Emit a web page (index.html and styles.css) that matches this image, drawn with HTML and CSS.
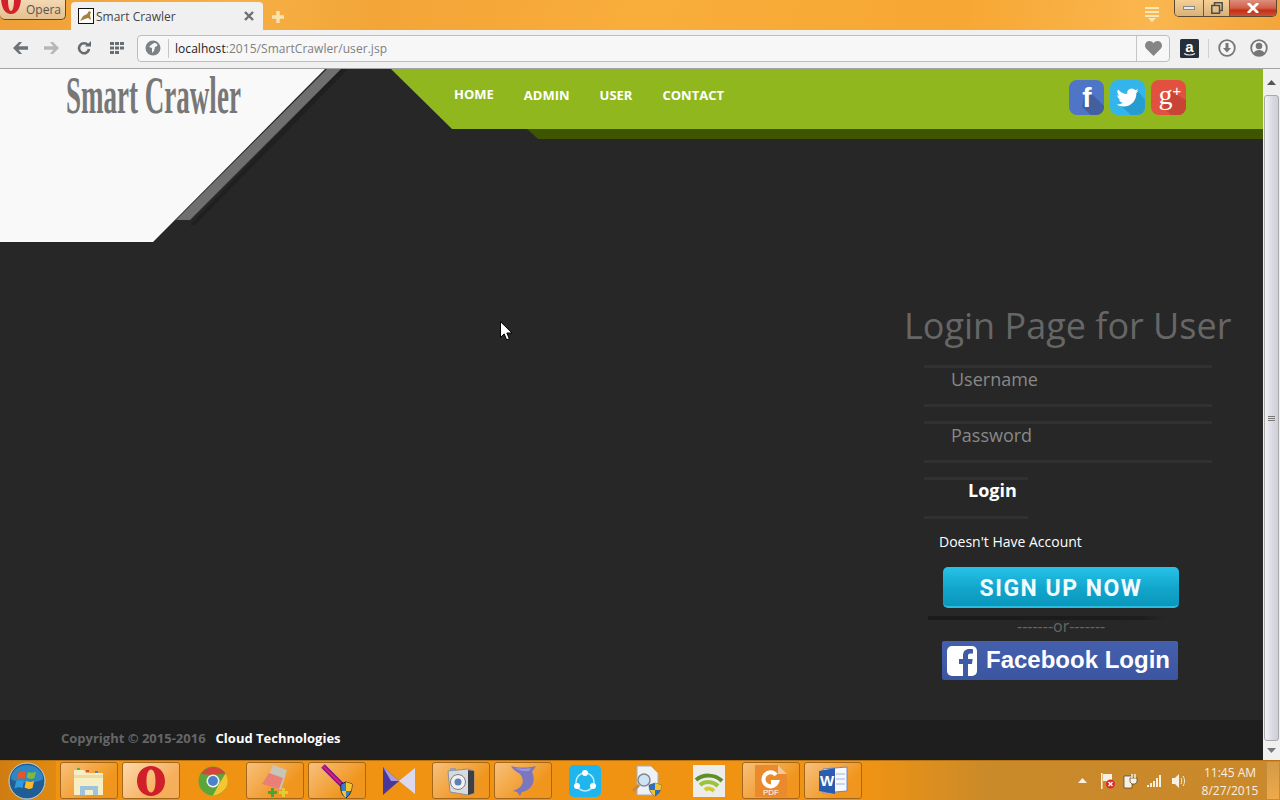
FILE: index.html
```html
<!DOCTYPE html>
<html lang="en">
<head>
    <meta charset="UTF-8">
    <title>Smart Crawler</title>
    <link rel="stylesheet" href="styles.css">
</head>
<body>

<div class="titlebar">
    <div class="opera-btn">
        <svg class="opera-logo" width="22" height="20" viewBox="0 0 22 20"><path fill="#d2202c" fill-rule="evenodd" d="M1 0h20c-.500 9-4 15-10 15S1.500 9 1 0zM8 0c0 8 1.200 12 3 12s3-4 3-12z"/></svg>
        <span>Opera</span>
    </div>
    <div class="tab">
        <svg class="favicon" width="16" height="16" viewBox="0 0 16 16"><rect x=".5" y=".5" width="15" height="15" fill="#fff" stroke="#111"/><path fill="#a8813c" d="M2 13l3-5 4-2 2-3 2 1-1 3 1 5-3-2-3 1z"/></svg>
        <span class="tab-title">Smart Crawler</span>
        <svg class="tab-close" width="10" height="10" viewBox="0 0 10 10"><path stroke="#6f6f6f" stroke-width="2.400" d="M1 1l8 8M9 1l-8 8"/></svg>
    </div>
    <svg class="new-tab" width="12" height="12" viewBox="0 0 12 12"><path stroke="#fbe3b0" stroke-width="3.400" d="M6 0v12M0 6h12"/></svg>
    <svg class="tab-menu" width="16" height="15" viewBox="0 0 16 15"><path fill="#fbe7b4" d="M1 0h14v2H1zM1 4h14v2H1zM1 8h14v2H1zM4 11h8l-4 4z"/></svg>
    <div class="win-buttons">
        <div class="win-btn win-min"><i></i></div>
        <div class="win-btn win-max"><svg width="12" height="12" viewBox="0 0 12 12"><path fill="none" stroke="#4d4d4d" stroke-width="1.500" d="M3.500 3V.8h7.700v7.700H9M.8 3.500h7.700v7.700H.8z"/></svg></div>
        <div class="win-btn win-close"><svg width="12" height="10" viewBox="0 0 12 10"><path stroke="#fff" stroke-width="2.800" d="M1 0l10 10M11 0L1 10"/></svg></div>
    </div>
</div>

<div class="toolbar">
    <svg class="tool-icon" width="16" height="12" viewBox="0 0 16 12"><path fill="#6d7277" d="M0 6l6-6h3L5.500 4.300H15v3.400H5.500L9 12H6z"/></svg>
    <svg class="tool-icon tool-off" width="16" height="12" viewBox="0 0 16 12"><path fill="#b4b7ba" d="M16 6l-6-6H7l3.500 4.300H1v3.400h9.500L7 12h3z"/></svg>
    <svg class="tool-icon tool-reload" width="14" height="14" viewBox="0 0 14 14"><path fill="none" stroke="#666b70" stroke-width="2.600" d="M11 4.200A5 5 0 1 0 12 8"/><path fill="#666b70" d="M8 5.500h6V0z"/></svg>
    <svg class="tool-icon tool-grid" width="14" height="12" viewBox="0 0 14 12"><path fill="#686d72" d="M0 0h4v3H0zM5 0h4v3H5zM10 0h4v3h-4zM0 4.500h4v3H0zM5 4.500h4v3H5zM10 4.500h4v3h-4zM0 9h4v3H0zM5 9h4v3H5z"/></svg>
    <div class="addressbar">
        <div class="site-icon">
            <svg width="16" height="16" viewBox="0 0 16 16"><circle cx="8" cy="8" r="7.500" fill="#7d8185"/><path fill="#f6f6f6" d="M9 3c3 0 4 2 3 3l-2 1-1 4-2 2 0-5-3-1 2-2z"/></svg>
        </div>
        <div class="url"><span class="url-host">localhost</span>:2015/SmartCrawler/user.jsp</div>
        <div class="heart">
            <svg width="17" height="15" viewBox="0 0 17 15"><path fill="#858585" d="M8.500 15L1.300 7.800C-1.500 4.800.5 0 4.500 0c1.700 0 3 .8 4 2.200 1-1.400 2.300-2.200 4-2.200 4 0 6 4.800 3.200 7.800z"/></svg>
        </div>
    </div>
    <svg class="amazon" width="19" height="19" viewBox="0 0 19 19"><rect width="19" height="19" rx="1.500" fill="#252f3a"/><text x="9.500" y="12.500" text-anchor="middle" class="amazon-a">a</text><path fill="none" stroke="#e8e8e8" stroke-width="1.100" d="M4 14.500c3 2 8 2 11 0"/></svg>
    <div class="tool-divider"></div>
    <svg class="tool-round" width="18" height="18" viewBox="0 0 18 18"><circle cx="9" cy="9" r="7.800" fill="#f6f6f6" stroke="#767676" stroke-width="1.800"/><path fill="#767676" d="M7.500 4h3v5h2.500L9 13.500 5 9h2.500z"/></svg>
    <svg class="tool-round tool-user" width="18" height="18" viewBox="0 0 18 18"><circle cx="9" cy="9" r="7.800" fill="#f6f6f6" stroke="#767676" stroke-width="1.800"/><circle cx="9" cy="7" r="3.300" fill="#767676"/><path fill="#767676" d="M3.500 14.500c1-3 3-3.500 5.500-3.500s4.500.5 5.500 3.500C12 17 6 17 3.500 14.500z"/></svg>
</div>

<div class="viewport">
    <div class="page">
        <svg class="page-art" width="1263" height="173" viewBox="0 0 1263 173">
            <path fill="#f9f9f9" d="M0 0H325L153 173H0z"/>
            <path fill="#202020" d="M341 0h7L195 156h-5z"/>
            <path fill="#6f6f6f" d="M327 0h14L190 151h-14z"/>
            <path fill="#90b81e" d="M391 0H1263V60H452z"/>
            <path fill="#3f5500" d="M527 60H1263V70H538z"/>
        </svg>

        <header class="site-header">
            <div class="logo"><span class="logo-text">Smart Crawler</span></div>
            <nav class="nav">
                <a href="#" class="nav-home">HOME</a>
                <a href="#">ADMIN</a>
                <a href="#">USER</a>
                <a href="#">CONTACT</a>
            </nav>
            <div class="social">
                <svg width="35" height="35" viewBox="0 0 35 35"><rect width="35" height="35" rx="8" fill="#4f75c6"/><path fill="#42609f" d="M17 8l18 18v1a8 8 0 0 1-8 8H22L13 27z"/><text x="18" y="27" text-anchor="middle" class="social-f">f</text></svg>
                <svg width="35" height="35" viewBox="0 0 35 35"><rect width="35" height="35" rx="8" fill="#33b4ea"/><path fill="#259dd0" d="M28 11l7 9v7a8 8 0 0 1-8 8h-6L10 25z"/><path fill="#fff" transform="translate(6.500 6.500) scale(.92)" d="M23.953 4.570a10 10 0 01-2.825.775 4.958 4.958 0 002.163-2.723c-.951.555-2.005.959-3.127 1.184a4.920 4.920 0 00-8.384 4.482C7.690 8.095 4.067 6.130 1.640 3.162a4.822 4.822 0 00-.666 2.475c0 1.710.870 3.213 2.188 4.096a4.904 4.904 0 01-2.228-.616v.060a4.923 4.923 0 003.946 4.827 4.996 4.996 0 01-2.212.085 4.936 4.936 0 004.604 3.417 9.867 9.867 0 01-6.102 2.105c-.390 0-.779-.023-1.170-.067a13.995 13.995 0 007.557 2.209c9.053 0 13.998-7.496 13.998-13.985 0-.210 0-.420-.015-.630A9.935 9.935 0 0024 4.590z"/></svg>
                <svg width="35" height="35" viewBox="0 0 35 35"><rect width="35" height="35" rx="8" fill="#e2503f"/><path fill="#c84437" d="M20 12l15 8v7a8 8 0 0 1-8 8h-7l-8-8z"/><text x="14.500" y="24" text-anchor="middle" class="social-g">g</text><text x="26" y="16" text-anchor="middle" class="social-plus">+</text></svg>
            </div>
        </header>

        <main class="content">
            <form class="login-panel">
                <h2 class="login-title">Login Page for User</h2>
                <input class="field" type="text" placeholder="Username">
                <input class="field" type="password" placeholder="Password">
                <button class="login-btn" type="button">Login</button>
                <p class="no-account">Doesn't Have Account</p>
                <a href="#" class="signup-btn">SIGN UP NOW</a>
                <div class="signup-shadow"></div>
                <div class="or-line">-------or-------</div>
                <a href="#" class="fb-btn">
                    <svg width="30" height="30" viewBox="0 0 30 30"><rect width="30" height="30" rx="5" fill="#fff"/><path fill="#3f5aa6" d="M21 30V18h4l.6-5H21v-3c0-1.500.5-2.400 2.400-2.400H26V3.200C25.500 3.100 24 3 22.300 3 18.700 3 16 5.200 16 9.400V13h-4v5h4v12z"/></svg>
                    <span>Facebook Login</span>
                </a>
            </form>
        </main>

        <footer class="site-footer">
            <span class="copy">Copyright © 2015-2016</span>
            <span class="company">Cloud Technologies</span>
        </footer>

        <svg class="cursor" width="13" height="20" viewBox="0 0 13 20"><path fill="#fff" stroke="#000" d="M.5.700v15.600l3.700-3.400 2.400 5.900 2.700-1.100-2.500-5.700h5.200z"/></svg>
    </div>

    <div class="scrollbar">
        <div class="scroll-arrow"><svg width="9" height="5" viewBox="0 0 9 5"><path fill="#555" d="M4.500 0L9 5H0z"/></svg></div>
        <div class="scroll-thumb"><i></i><i></i><i></i></div>
        <div class="scroll-arrow scroll-arrow-down"><svg width="9" height="5" viewBox="0 0 9 5"><path fill="#777" d="M4.500 5L9 0H0z"/></svg></div>
    </div>
</div>

<div class="taskbar">
    <div class="start">
        <svg width="38" height="38" viewBox="0 0 38 38">
            <circle cx="19" cy="19" r="18" fill="#1f5d94" stroke="#c4d5de"/>
            <path fill="#2f86c0" d="M3 17a16 14 0 0 1 32 0c-8 5-24 5-32 0z"/>
            <path fill="#e8542a" d="M10 11c3-2 5-2 8-1l-1.500 7c-3-1-5-1-8 .5z"/>
            <path fill="#7db93d" d="M20 10c3 1 5 1 8-.5L26.500 16c-3 1.500-5 1-8-.5z"/>
            <path fill="#2e9bdc" d="M8 19.500c3-1.500 5-1.500 8-.5l-1.500 7c-3-1-5-1-8 .5z"/>
            <path fill="#f8bb2c" d="M18 19c3 1 5 1.500 8 0l-1.500 7c-3 1.500-5 1-8-.5z"/>
        </svg>
    </div>
    <div class="task framed">
        <svg width="32" height="32" viewBox="0 0 32 32"><path fill="#f8eec4" d="M1 5h10l2 3h17v22H1z"/><path fill="#eedc9e" d="M1 10h29v3H1z"/><path fill="#9cc4de" d="M7 21h18v9h-5v-5h-8v5H7z"/><path fill="#55b04f" d="M4 3h3v2H4z"/><path fill="#d2503a" d="M13 5h3v2h-3z"/><path fill="#3d8fd0" d="M22 6h3v2h-3z"/></svg>
    </div>
    <div class="task framed task-bright">
        <svg width="30" height="32" viewBox="0 0 30 32"><path fill="#cf1f2b" fill-rule="evenodd" d="M15 1c8 0 14 6.500 14 15s-6 15-14 15S1 24.500 1 16 7 1 15 1zm0 3.500c-3 0-4.500 5-4.500 11.500S12 27.500 15 27.500s4.500-5 4.500-11.500S18 4.500 15 4.500z"/></svg>
    </div>
    <div class="task">
        <svg width="30" height="30" viewBox="0 0 30 30"><circle cx="15" cy="15" r="14.500" fill="#5ba63b"/><path fill="#d6453a" d="M3 8a14.500 14.500 0 0 1 24.500-.5L15 9z"/><path fill="#f4c631" d="M27.500 7.500c3 5 3 11-.5 15.500S18 29.500 15 29.500L21 18z"/><circle cx="15" cy="15" r="6.500" fill="#f4f4f4"/><circle cx="15" cy="15" r="5" fill="#4b83c8"/></svg>
    </div>
    <div class="task framed">
        <svg width="32" height="34" viewBox="0 0 32 34"><path fill="#c9c4b8" d="M14 1l14 5-6 20L6 20z"/><path fill="#ea7f78" d="M10 9l14 5-4 11-17-5z"/><path fill="#45a53a" d="M12 24h3v3h3v3h-3v3h-3v-3H9v-3h3z"/><path fill="#e2cb35" d="M23 24h3v3h3v3h-3v3h-3v-3h-3v-3h3z"/></svg>
    </div>
    <div class="task framed">
        <svg width="34" height="34" viewBox="0 0 34 34"><path fill="none" stroke="#6b1b95" stroke-width="5" d="M3 2l20 20"/><path fill="none" stroke="#e2187a" stroke-width="2" d="M3 2l20 20"/><path fill="#3b7cc4" stroke="#222" d="M21 20l5-2 6 2c0 7-2 11-6 14-4-3-6-7-5-14z"/><path fill="#f2c530" d="M26 18l6 2c0 3-.5 5-1 7h-5zM26 27v7c-2-1.500-3.500-4-4.500-7z"/></svg>
    </div>
    <div class="task">
        <svg width="34" height="30" viewBox="0 0 34 30"><path fill="#4a379c" d="M1 1l16 14L1 29z"/><path fill="#a99cdc" d="M1 1l16 14-8 0z"/><path fill="#dcd8ee" d="M33 2L17 15l16 13z"/></svg>
    </div>
    <div class="task framed">
        <svg width="30" height="28" viewBox="0 0 30 28"><path fill="#d7dbdf" stroke="#8b8f94" d="M2 4l20-2 6 2v22l-6 2-18-3z"/><path fill="#3d3f44" d="M22 3l6 1v22l-6 2z"/><circle cx="12" cy="15" r="7.500" fill="#eef0f2" stroke="#7a7f85"/><circle cx="12" cy="15" r="3.500" fill="#5e7fb0"/><path fill="#9aa0a6" d="M4 1h6v3H4z"/></svg>
    </div>
    <div class="task framed">
        <svg width="28" height="32" viewBox="0 0 28 32"><path fill="#7c76bf" d="M2 1c7 2 16 2 25 0l-4 6c3 6 2 13-3 17-3 2-5 3-7 3l-2 4-3-4-4-1c3-1 6-3 8-5 3-4 2-8-1-12C8 7 4 5 2 1z"/><path fill="#9c97d6" d="M6 3c5 1 11 1 16 0l-2 3c-4 .5-9 .5-14-3z"/></svg>
    </div>
    <div class="task">
        <svg width="32" height="32" viewBox="0 0 32 32"><rect width="32" height="32" rx="5" fill="#1fb6ee"/><circle cx="16" cy="17" r="9" fill="none" stroke="#bfeafa" stroke-width="1.500"/><circle cx="16" cy="8" r="3" fill="#fff"/><circle cx="8" cy="21" r="3" fill="#fff"/><circle cx="24" cy="21" r="3" fill="#fff"/></svg>
    </div>
    <div class="task">
        <svg width="30" height="32" viewBox="0 0 30 32"><path fill="#eef1f5" stroke="#a6adb8" d="M5 1h14l7 7v22H5z"/><circle cx="12" cy="15" r="6" fill="#cfe3f2" stroke="#808a96" stroke-width="1.500"/><path stroke="#c9863a" stroke-width="3" d="M7 20l-6 6"/><path fill="#2f6fc0" stroke="#444" stroke-width=".5" d="M17 20l6-2 6 2c0 6-2 9-6 11-4-2-6-5-6-11z"/><path fill="#f2c530" d="M23 18l6 2c0 2 0 3-.5 5H23zM23 25v6c-2-1-4-3-5-6z"/></svg>
    </div>
    <div class="task">
        <svg width="32" height="32" viewBox="0 0 32 32"><rect width="32" height="32" fill="#ecedea"/><path fill="none" stroke="#5f8f2a" stroke-width="4" d="M3 15c7-6 19-6 26 1"/><path fill="none" stroke="#9ac43c" stroke-width="4" d="M7 20c5-4 13-4 18 1"/><path fill="none" stroke="#d5c72f" stroke-width="4" d="M12 25c2-2 6-2 9 1"/></svg>
    </div>
    <div class="task framed">
        <svg width="32" height="32" viewBox="0 0 32 32"><path fill="#ea8a2c" d="M0 0h23l9 9v23H0z"/><path fill="#f6c79a" d="M23 0l9 9h-9z"/><path fill="none" stroke="#fff" stroke-width="4" d="M21 10a7 7 0 1 0 1 7h-6"/><text x="16" y="30" text-anchor="middle" class="pdf-label">PDF</text></svg>
    </div>
    <div class="task framed">
        <svg width="32" height="30" viewBox="0 0 32 30"><path fill="#f6f8fc" stroke="#6d87b5" d="M6 3l24-2v24L6 27z"/><path fill="#2a5db0" d="M2 5l16-3v26L2 25z"/><path fill="#c8d6ee" d="M19 7h9v2h-9zM19 12h9v2h-9zM19 17h9v2h-9z"/><text x="10" y="20" text-anchor="middle" class="word-w">W</text></svg>
    </div>
    <div class="tray">
        <svg class="tray-arrow" width="9" height="5" viewBox="0 0 9 5"><path fill="#fbf0dc" d="M4.500 0L9 5H0z"/></svg>
        <svg class="tray-flag" width="16" height="16" viewBox="0 0 16 16"><path fill="#f7f1e4" d="M1 0h1.500v16H1zM3 1h9v7H3z"/><circle cx="10.500" cy="11" r="4.500" fill="#dc2c2c"/><path stroke="#fff" stroke-width="1.400" d="M8.500 9l4 4M12.500 9l-4 4"/></svg>
        <svg width="15" height="16" viewBox="0 0 15 16"><path fill="#f7f1e4" stroke="#4a3a20" stroke-width=".7" d="M1 3h8v12H1z"/><path fill="#f7f1e4" stroke="#4a3a20" stroke-width=".7" d="M7 5h7v4l-2 2H9L7 9z"/><path stroke="#f7f1e4" stroke-width="1.500" d="M9 1v4M12 1v4"/></svg>
        <svg width="16" height="12" viewBox="0 0 16 12"><path fill="#f7f1e4" d="M0 10h2v2H0zM3 8h2v4H3zM6 6h2v6H6zM9 3h2v9H9zM12 0h2v12h-2z"/></svg>
        <svg width="15" height="14" viewBox="0 0 15 14"><path fill="#f7f1e4" d="M0 4h3l4-4v14l-4-4H0z"/><path fill="none" stroke="#f7f1e4" d="M9 4c1 2 1 4 0 6M11 2c2 3 2 7 0 10"/></svg>
        <div class="clock"><div>11:45 AM</div><div>8/27/2015</div></div>
        <div class="show-desktop"></div>
    </div>
</div>

</body>
</html>
```

FILE: styles.css
```css
* {
    box-sizing: border-box;
}

body {
    margin: 0;
    width: 1280px;
    height: 800px;
    overflow: hidden;
    display: flex;
    flex-direction: column;
    font-family: 'Open Sans', sans-serif;
    background-color: #272727;
}

/* browser title bar */
.titlebar {
    height: 30px;
    display: flex;
    align-items: flex-start;
    background: linear-gradient(100deg, #ee9f35 0%, #f6b046 18%, #f3a537 30%, #f9ad3b 50%, #f7a733 75%, #fab64f 90%, #f3a53a 100%);
}

.titlebar > * {
    flex: none;
}

.opera-btn {
    width: 66px;
    height: 20px;
    display: flex;
    align-items: center;
    border: 1px solid #6b4a22;
    border-top: none;
    border-left: none;
    border-radius: 0 0 5px 5px;
    background: linear-gradient(#f3d8b4, #e3c08f);
    color: #555;
    font-size: 12px;
    overflow: hidden;
}

.opera-logo {
    flex: none;
    margin: -1px 4px 0 0;
}

.tab {
    width: 192px;
    height: 28px;
    margin: 2px 0 0 5px;
    padding: 0 9px 0 7px;
    display: flex;
    align-items: center;
    background-color: #f0f0f0;
    border-radius: 4px 4px 0 0;
    font-size: 12px;
    color: #444;
}

.tab-title {
    margin-left: 2px;
    flex: 1;
}

.new-tab {
    margin: 11px 0 0 9px;
}

.tab-menu {
    margin: 7px 0 0 860px;
}

.win-buttons {
    margin-left: 14px;
    width: 103px;
    height: 17px;
    display: flex;
    border: 1px solid #5a4a33;
    border-top: none;
    border-radius: 0 0 5px 5px;
    overflow: hidden;
}

.win-btn {
    display: flex;
    align-items: center;
    justify-content: center;
}

.win-min {
    width: 29px;
    border-right: 1px solid #6b5a40;
    background: linear-gradient(#f5cf94, #d9b27a);
}

.win-min i {
    width: 12px;
    height: 4px;
    background-color: #e9e9e9;
    border: 1px solid #888;
}

.win-max {
    width: 26px;
    border-right: 1px solid #6b5a40;
    background: linear-gradient(#f5cf94, #d9b27a);
}

.win-close {
    flex: 1;
    background: linear-gradient(#dc8f7c 0%, #d0604a 50%, #c52f14 65%, #c9523a 100%);
}

/* browser toolbar */
.toolbar {
    height: 39px;
    display: flex;
    align-items: center;
    padding: 0 0 2px 13px;
    background-color: #f0f0f0;
    border-bottom: 1px solid #a3a3a3;
}

.toolbar > * {
    flex: none;
}

.tool-icon {
    margin-right: 14px;
}

.tool-reload {
    margin-left: 4px;
    margin-right: 19px;
}

.tool-grid {
    margin-right: 13px;
}

.addressbar {
    width: 1033px;
    height: 27px;
    display: flex;
    align-items: center;
    background-color: #f7f7f7;
    border: 1px solid #bdbdbd;
    border-radius: 4px;
}

.site-icon {
    width: 31px;
    height: 19px;
    padding-left: 7px;
    display: flex;
    align-items: center;
    border-right: 1px solid #c6c6c6;
}

.url {
    flex: 1;
    padding-left: 6px;
    font-size: 12px;
    letter-spacing: .05px;
    color: #808080;
}

.url-host {
    color: #222;
}

.heart {
    width: 33px;
    height: 25px;
    display: flex;
    align-items: center;
    justify-content: center;
    border-left: 1px solid #c6c6c6;
}

.amazon {
    margin-left: 10px;
}

.amazon-a {
    font: bold 15px 'Liberation Sans', sans-serif;
    fill: #fff;
}

.tool-divider {
    width: 1px;
    height: 19px;
    margin: 0 9px;
    background-color: #cfcfcf;
}

.tool-user {
    margin-left: 14px;
}

/* page inside the window */
.viewport {
    height: 691px;
    display: flex;
}

.page {
    position: relative;
    width: 1263px;
    display: flex;
    flex-direction: column;
    background-color: #272727;
}

.page-art {
    position: absolute;
    left: 0;
    top: 0;
}

.cursor {
    position: absolute;
    left: 500px;
    top: 252px;
}

.site-header {
    position: relative;
    height: 70px;
    padding-top: 7px;
    display: flex;
    align-items: flex-start;
}

.logo {
    width: 388px;
    margin-left: 66px;
    height: 38px;
}

.logo-text {
    display: inline-block;
    transform: scaleX(.51);
    transform-origin: left top;
    white-space: nowrap;
    font: bold 53px/38px 'Liberation Serif', serif;
    color: #777;
}

.nav {
    display: flex;
    gap: 30px;
    padding-top: 10px;
}

.nav a {
    font-size: 13px;
    line-height: 18px;
    font-weight: 700;
    color: #fff;
    text-decoration: none;
}

.nav .nav-home {
    margin-top: -1px;
}

.social {
    margin-left: auto;
    margin-top: 4px;
    padding-right: 77px;
    display: flex;
    gap: 6px;
}

.social-f {
    font: bold 28px 'Liberation Sans', sans-serif;
    fill: #fff;
}

.social-g {
    font: 28px 'Liberation Serif', serif;
    fill: #fff;
}

.social-plus {
    font: 15px 'Liberation Sans', sans-serif;
    fill: #fff;
}

.content {
    position: relative;
    flex: 1;
    display: flex;
    justify-content: flex-end;
}

.login-panel {
    width: 358px;
    padding-top: 163px;
    display: flex;
    flex-direction: column;
    align-items: flex-start;
}

.login-title {
    margin: 0 0 15px -1px;
    font-size: 36px;
    line-height: 48px;
    font-weight: 400;
    color: #666;
    white-space: nowrap;
}

.field {
    width: 288px;
    height: 42px;
    margin: 0 0 14px 19px;
    padding: 0 0 14px 27px;
    background: none;
    border: none;
    border-top: 3px solid #313131;
    border-bottom: 3px solid #313131;
    outline: none;
    font-family: inherit;
    font-size: 18px;
    color: #888;
}

.field::placeholder {
    color: #888;
    opacity: 1;
}

.login-btn {
    width: 104px;
    height: 42px;
    margin-left: 19px;
    padding: 0 0 16px 44px;
    text-align: left;
    background: none;
    border: none;
    border-top: 3px solid #313131;
    border-bottom: 3px solid #313131;
    font-family: inherit;
    font-size: 18px;
    line-height: 18px;
    font-weight: 700;
    color: #fff;
}

.no-account {
    margin: 13px 0 0 34px;
    font-size: 14px;
    line-height: 20px;
    color: #fff;
}

.signup-btn {
    width: 236px;
    height: 41px;
    margin: 15px 0 0 38px;
    padding-top: 4px;
    display: flex;
    align-items: center;
    justify-content: center;
    border-radius: 5px;
    background: linear-gradient(#27c2e8, #12a5cb 55%, #0a97bd);
    border-bottom: 2px solid #29bde0;
    color: #f2fbff;
    font: 700 23px 'Roboto', sans-serif;
    letter-spacing: 1.500px;
    text-decoration: none;
}

.signup-shadow {
    width: 237px;
    height: 4px;
    margin: 8px 0 0 23px;
    background: linear-gradient(90deg, #1a1a1a, #1d1d1d 90%, #272727);
}

.or-line {
    margin: -3px 0 0 112px;
    font-size: 16px;
    line-height: 18px;
    color: #666;
}

.fb-btn {
    width: 236px;
    height: 39px;
    margin: 6px 0 0 37px;
    padding: 0 0 2px 5px;
    display: flex;
    align-items: center;
    gap: 9px;
    border-radius: 2px;
    background: linear-gradient(#4460ad, #3c55a0);
    color: #fff;
    font: bold 24px 'Liberation Sans', sans-serif;
    text-decoration: none;
}

.fb-btn svg {
    margin-top: 2px;
}

.site-footer {
    position: relative;
    height: 40px;
    padding: 0 0 4px 61px;
    display: flex;
    align-items: center;
    gap: 10px;
    background-color: #1e1e1e;
    font-size: 13px;
    font-weight: 700;
}

.copy {
    color: #666;
}

.company {
    color: #fff;
}

/* scrollbar */
.scrollbar {
    width: 17px;
    display: flex;
    flex-direction: column;
    align-items: center;
    background-color: #f0f0f0;
}

.scroll-arrow {
    height: 26px;
    flex: none;
    display: flex;
    align-items: center;
    justify-content: center;
}

.scroll-arrow-down {
    height: 19px;
}

.scroll-thumb {
    flex: 1;
    width: 15px;
    display: flex;
    flex-direction: column;
    align-items: center;
    justify-content: center;
    gap: 1px;
    border: 1px solid #a9a9a9;
    border-radius: 3px;
    background: linear-gradient(90deg, #f2f2f5, #d8d8e2 60%, #cfcfd8);
}

.scroll-thumb i {
    width: 7px;
    height: 1px;
    background-color: #777;
}

/* windows taskbar */
.taskbar {
    height: 40px;
    display: flex;
    align-items: center;
    gap: 4px;
    background-color: #f09313;
    border-top: 1px solid #b87310;
}

.start {
    width: 56px;
    height: 39px;
    display: flex;
    align-items: center;
    padding-left: 8px;
    background: linear-gradient(90deg, #cf7d12, #e08a10);
}

.task {
    width: 58px;
    height: 37px;
    flex: none;
    display: flex;
    align-items: center;
    justify-content: center;
}

.framed {
    border: 1px solid #a5671a;
    border-radius: 3px;
    background: linear-gradient(135deg, #f8c07c, #f0961f 70%);
}

.task-bright {
    background: linear-gradient(135deg, #fcd9ac, #f6ae5a 70%);
}

.tray {
    flex: 1;
    height: 39px;
    display: flex;
    align-items: center;
    justify-content: flex-end;
    gap: 9px;
    background: linear-gradient(90deg, #f09313, #c98a2a 30%, #c9892c);
}

.tray-arrow {
    margin-right: 4px;
}

.tray-flag {
    margin-right: -2px;
}

.clock {
    width: 60px;
    margin-left: 4px;
    padding-top: 2px;
    text-align: center;
    font-size: 12px;
    line-height: 18px;
    color: #f7efe0;
}

.show-desktop {
    width: 14px;
    height: 39px;
    margin-left: -3px;
    border: 1px solid #c58a3a;
    background: linear-gradient(#d39a48, #eeaa4a);
}

.pdf-label {
    font: 8px 'Liberation Sans', sans-serif;
    fill: #fff;
}

.word-w {
    font: bold 15px 'Liberation Sans', sans-serif;
    fill: #fff;
}
```
